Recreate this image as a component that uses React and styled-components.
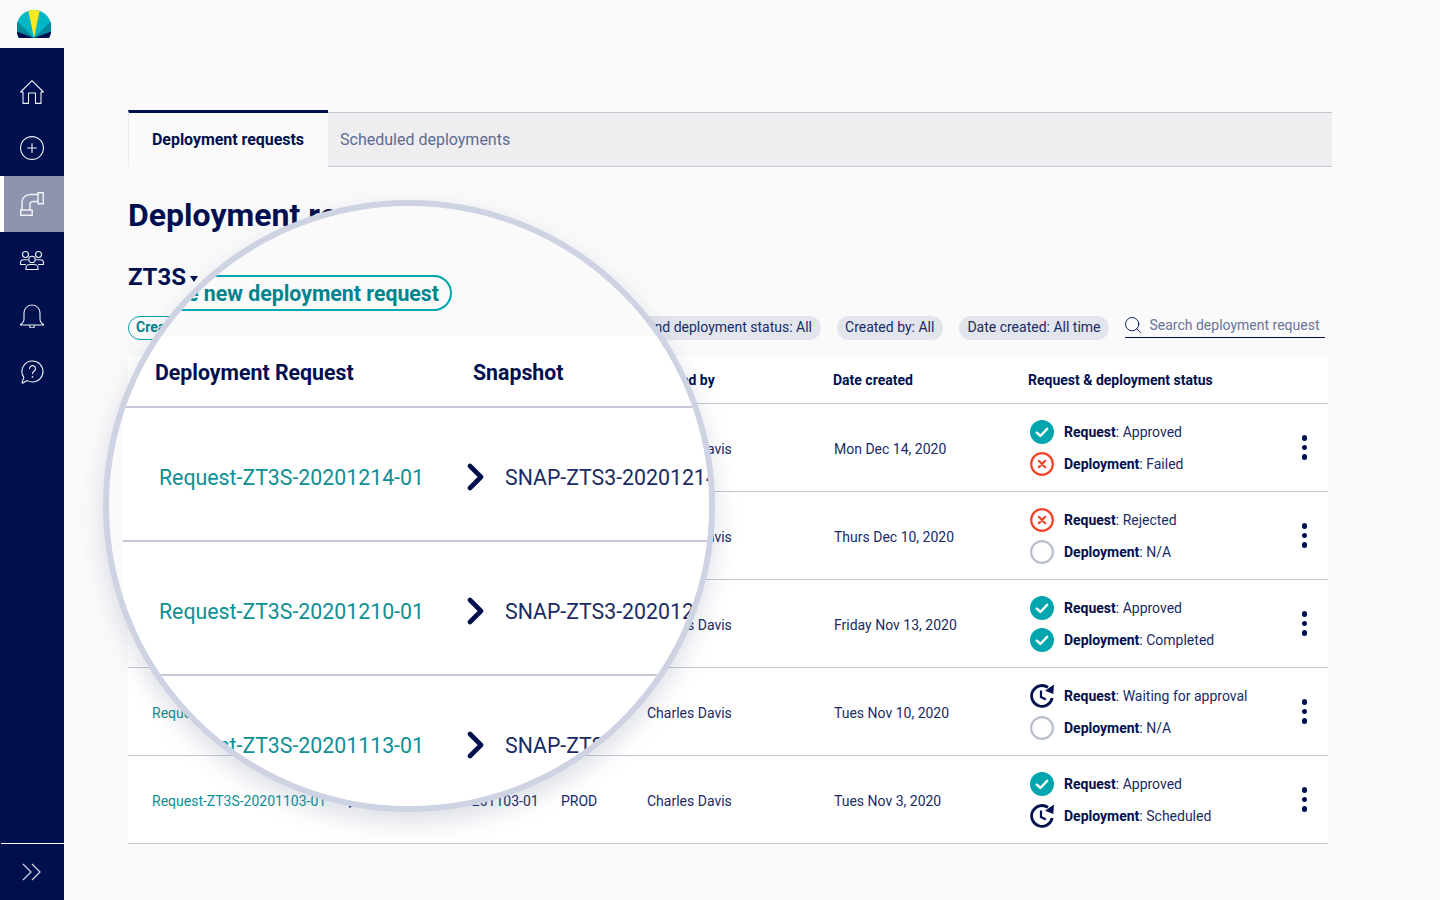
import styled, { createGlobalStyle } from 'styled-components'
import { Search } from 'lucide-react'

const navy = '#00104f'
const ink = '#1a2a64'
const line = '#c3c7d6'

const rows = [
  { id: 'Request-ZT3S-20201214-01', snap: 'SNAP-ZTS3-20201214-01', env: 'PROD', by: 'Charles Davis', date: 'Mon Dec 14, 2020', req: ['ok', 'Approved'], dep: ['fail', 'Failed'] },
  { id: 'Request-ZT3S-20201210-01', snap: 'SNAP-ZTS3-20201210-01', env: 'PROD', by: 'Charles Davis', date: 'Thurs Dec 10, 2020', req: ['fail', 'Rejected'], dep: ['none', 'N/A'] },
  { id: 'Request-ZT3S-20201113-01', snap: 'SNAP-ZTS3-20201113-01', env: 'PROD', by: 'Charles Davis', date: 'Friday Nov 13, 2020', req: ['ok', 'Approved'], dep: ['ok', 'Completed'] },
  { id: 'Request-ZT3S-20201110-01', snap: 'SNAP-ZTS3-20201110-01', env: 'PROD', by: 'Charles Davis', date: 'Tues Nov 10, 2020', req: ['wait', 'Waiting for approval'], dep: ['none', 'N/A'] },
  { id: 'Request-ZT3S-20201103-01', snap: 'SNAP-ZTS3-20201103-01', env: 'PROD', by: 'Charles Davis', date: 'Tues Nov 3, 2020', req: ['ok', 'Approved'], dep: ['wait', 'Scheduled'] },
]

const lensRows = rows.slice(0, 3)

function StatusIcon({ kind }) {
  if (kind === 'ok') {
    return (
      <svg width="24" height="24" viewBox="0 0 24 24">
        <circle cx="12" cy="12" r="12" fill="#00a5ad" />
        <path d="M6.8 12.6l3.6 3.4 6.8-7.2" fill="none" stroke="#fff" strokeWidth="2.4" strokeLinecap="round" strokeLinejoin="round" />
      </svg>
    )
  }
  if (kind === 'fail') {
    return (
      <svg width="24" height="24" viewBox="0 0 24 24">
        <circle cx="12" cy="12" r="10.8" fill="none" stroke="#f4452a" strokeWidth="2.2" />
        <path d="M8.8 8.8l6.4 6.4M15.2 8.8l-6.4 6.4" fill="none" stroke="#f4452a" strokeWidth="2.2" strokeLinecap="round" />
      </svg>
    )
  }
  if (kind === 'wait') {
    return (
      <svg width="24" height="24" viewBox="0 0 24 24">
        <path d="M18 3.400A10.400 10.400 0 1 0 22.200 14" fill="none" stroke={navy} strokeWidth="2.800" />
        <path d="M24 .6l-.7 9.400-8.300-3.300z" fill={navy} />
        <path d="M11 6.500v6.500l4.800 2.500" fill="none" stroke={navy} strokeWidth="2.200" />
      </svg>
    )
  }
  return (
    <svg width="24" height="24" viewBox="0 0 24 24">
      <circle cx="12" cy="12" r="10.900" fill="none" stroke="#b9bed0" strokeWidth="2.200" />
    </svg>
  )
}

function NavIcon({ children }) {
  return (
    <svg width="24" height="24" viewBox="0 0 24 24" fill="none" stroke="#eef0f6" strokeWidth="1.100" strokeLinejoin="round" strokeLinecap="round">
      {children}
    </svg>
  )
}

function Logo() {
  return (
    <svg width="34" height="30" viewBox="0 0 34 30">
      <defs>
        <clipPath id="dome">
          <path d="M2 29C.6 26.500 0 24 0 21.500A17 17 0 0 1 17 1a17 17 0 0 1 17 20.500c0 2.500-.6 5-2 7.500z" />
        </clipPath>
      </defs>
      <g clipPath="url(#dome)">
        <rect width="34" height="30" fill="#00b8c4" />
        <path d="M17 29L-4 8V30H38V8z" fill="#00899a" />
        <path d="M17 29L-4 21V30H38V21z" fill={navy} />
        <path d="M17 29L11 0H23z" fill="#ffe81f" />
      </g>
    </svg>
  )
}

function App() {
  return (
    <Page>
      <GlobalStyle />
      <Sidebar>
        <LogoBox><Logo /></LogoBox>
        <Nav>
          <NavItems>
            <NavItem>
              <NavIcon><path d="M.6 12L12 .6 23.400 12H21v11.400h-5.500V13h-7v10.400H3V12z" /></NavIcon>
            </NavItem>
            <NavItem>
              <NavIcon><circle cx="12" cy="12" r="11.400" /><path d="M12 7.500v9M7.500 12h9" /></NavIcon>
            </NavItem>
            <NavItem $active>
              <NavIcon>
                <path d="M18 2.500h-8a8 8 0 0 0-8 8V18M18 9.500h-5a3 3 0 0 0-3 3V18" strokeWidth="1.500" />
                <rect x="18" y=".7" width="5.300" height="11" strokeWidth="1.500" />
                <rect x=".7" y="18" width="11.500" height="5.300" strokeWidth="1.500" />
              </NavIcon>
            </NavItem>
            <NavItem>
              <NavIcon>
                <circle cx="5.500" cy="6.500" r="3" />
                <circle cx="18.500" cy="6.500" r="3" />
                <circle cx="12" cy="11.500" r="3.200" />
                <path d="M6 21.500V20c0-2 1.800-3.500 3.500-3.500h5c1.700 0 3.500 1.500 3.500 3.500v1.500z" />
                <path d="M5.500 16.500H.5V15c0-2 1.500-3.200 3.200-3.200H7.500M18.500 16.500h5V15c0-2-1.500-3.200-3.200-3.200H16.500" />
              </NavIcon>
            </NavItem>
            <NavItem>
              <NavIcon>
                <path d="M12 1C7 1 4 5 4 9v6c0 2-1 4-3.500 5.500v.5h23v-.5C21 19 20 17 20 15V9c0-4-3-8-8-8z" />
                <path d="M9.500 21.500a2.500 2.500 0 0 0 5 0" />
              </NavIcon>
            </NavItem>
            <NavItem>
              <NavIcon>
                <path d="M12.500 1a10.500 10.500 0 0 1 0 21c-2 0-3.800-.5-5.200-1.400L3 23c-.5.300-1 0-.8-.6l1.600-5A10.500 10.500 0 0 1 12.500 1z" />
                <path d="M9.500 8.500a3 3 0 1 1 4.500 2.700c-1 .6-1.500 1.300-1.500 2.600" />
                <path d="M12.500 16.700v.3" strokeWidth="1.600" />
              </NavIcon>
            </NavItem>
          </NavItems>
          <Expand>
            <svg width="20" height="18" viewBox="0 0 20 18" fill="none" stroke="#d5d8e5" strokeWidth="1.200">
              <path d="M1 1l8 8-8 8M10 1l8 8-8 8" />
            </svg>
          </Expand>
        </Nav>
      </Sidebar>

      <Main>
        <Tabs>
          <Tab $active>Deployment requests</Tab>
          <Tab>Scheduled deployments</Tab>
          <TabFill />
        </Tabs>

        <Title>Deployment requests</Title>
        <Project>ZT3S<Caret /></Project>

        <FilterRow>
          <CreatePill>Create new deployment request</CreatePill>
          <Filters>
            <Chip>Environment: All</Chip>
            <Chip>Request and deployment status: All</Chip>
            <Chip>Created by: All</Chip>
            <Chip>Date created: All time</Chip>
            <SearchBox>
              <SearchIcon size={20} strokeWidth={1.100} color={navy} />
              <span>Search deployment request</span>
            </SearchBox>
          </Filters>
        </FilterRow>

        <Table>
          <HeadRow>
            <HeadFirst><span>Deployment Request</span><span>Snapshot</span></HeadFirst>
            <span>Env</span>
            <span>Created by</span>
            <span>Date created</span>
            <span>Request &amp; deployment status</span>
          </HeadRow>
          {rows.map((r) => (
            <Row key={r.id}>
              <FirstCell>
                <RowLink>{r.id}</RowLink>
                <svg width="10" height="14" viewBox="0 0 10 14" fill="none" stroke={navy} strokeWidth="2.200" strokeLinecap="round" strokeLinejoin="round">
                  <path d="M2 1.500L7.500 7 2 12.500" />
                </svg>
                <span>{r.snap}</span>
              </FirstCell>
              <span>{r.env}</span>
              <span>{r.by}</span>
              <DateCell>{r.date}</DateCell>
              <StatusCell>
                <StatusList>
                  <StatusLine><StatusIcon kind={r.req[0]} /><span><b>Request</b>: {r.req[1]}</span></StatusLine>
                  <StatusLine><StatusIcon kind={r.dep[0]} /><span><b>Deployment</b>: {r.dep[1]}</span></StatusLine>
                </StatusList>
                <Dots><i /><i /><i /></Dots>
              </StatusCell>
            </Row>
          ))}
        </Table>
      </Main>

      <Lens>
        <LensPill>Create new deployment request</LensPill>
        <LensPanel>
          <LensHead>
            <span>Deployment Request</span>
            <span>Snapshot</span>
          </LensHead>
          {lensRows.map((r) => (
            <LensRow key={r.id}>
              <LensLink>{r.id}</LensLink>
              <svg width="38" height="30" viewBox="0 0 38 30" fill="none" stroke={navy} strokeWidth="4.600" strokeLinecap="round" strokeLinejoin="round">
                <path d="M3 4l11 11L3 26" />
              </svg>
              <span>{r.snap}</span>
            </LensRow>
          ))}
        </LensPanel>
      </Lens>
    </Page>
  )
}

const GlobalStyle = createGlobalStyle`
  html, body {
    margin: 0;
    height: 100%;
    background: #fafafb;
    font-family: Roboto, "Liberation Sans", sans-serif;
    color: ${ink};
  }
`

const Page = styled.div`
  position: relative;
  display: flex;
  height: 100vh;
  overflow: hidden;
`

const Sidebar = styled.aside`
  width: 64px;
  flex: none;
  display: flex;
  flex-direction: column;
`

const LogoBox = styled.div`
  height: 48px;
  display: flex;
  justify-content: center;
  align-items: flex-start;
  padding: 9px 0 0 4px;
  box-sizing: border-box;
`

const Nav = styled.nav`
  flex: 1;
  background: ${navy};
  display: flex;
  flex-direction: column;
  justify-content: space-between;
`

const NavItems = styled.div`
  padding-top: 16px;
`

const NavItem = styled.div`
  height: 56px;
  display: flex;
  align-items: center;
  justify-content: center;
  box-sizing: border-box;
  background: ${(p) => (p.$active ? '#8e94ae' : 'transparent')};
  border-left: ${(p) => (p.$active ? '4px solid #fff' : 'none')};
  padding-right: ${(p) => (p.$active ? '4px' : '0')};
`

const Expand = styled.div`
  height: 57px;
  margin-left: 1px;
  border-top: 1px solid #fff;
  box-sizing: border-box;
  display: flex;
  align-items: center;
  justify-content: center;
  padding-right: 2px;
`

const Main = styled.main`
  flex: 1;
  padding: 110px 108px 0 64px;
`

const Tabs = styled.div`
  display: flex;
  height: 57px;
`

const Tab = styled.div`
  box-sizing: border-box;
  display: flex;
  align-items: center;
  font-size: 16px;
  white-space: nowrap;
  ${(p) =>
    p.$active
      ? `
    width: 200px;
    padding: 0 0 2px 23px;
    border-top: 3px solid ${navy};
    border-left: 1px solid #ececf0;
    font-weight: 700;
    letter-spacing: -0.05px;
    color: ${navy};
  `
      : `
    margin-top: 2px;
    padding: 0 0 0 12px;
    background: #eeeef1;
    border-top: 1px solid ${line};
    border-bottom: 1px solid ${line};
    color: #5f6a90;
    width: 230px;
  `}
`

const TabFill = styled.div`
  flex: 1;
  margin-top: 2px;
  background: #eeeef1;
  border-top: 1px solid ${line};
  border-bottom: 1px solid ${line};
`

const Title = styled.h1`
  margin: 28px 0 0;
  font-size: 32px;
  line-height: 40px;
  font-weight: 700;
  color: ${navy};
  white-space: nowrap;
`

const Project = styled.div`
  display: flex;
  align-items: center;
  margin-top: 26px;
  font-size: 24px;
  line-height: 32px;
  font-weight: 700;
  color: ${navy};
`

const Caret = styled.span`
  width: 0;
  height: 0;
  margin: 4px 0 0 4px;
  border-left: 4px solid transparent;
  border-right: 4px solid transparent;
  border-top: 6px solid ${navy};
`

const FilterRow = styled.div`
  display: flex;
  align-items: center;
  justify-content: space-between;
  margin: 23px 0 16px;
  height: 24px;
  padding-right: 7px;
`

const CreatePill = styled.div`
  box-sizing: border-box;
  height: 24px;
  line-height: 21px;
  padding: 0 7px;
  border: 1px solid #00a5ad;
  border-radius: 12px;
  font-size: 14px;
  font-weight: 700;
  color: #00848c;
  white-space: nowrap;
`

const Filters = styled.div`
  display: flex;
  align-items: center;
  gap: 16px;
`

const Chip = styled.div`
  height: 24px;
  line-height: 22px;
  padding: 0 8.500px;
  border-radius: 12px;
  background: #e3e5ec;
  font-size: 14px;
  white-space: nowrap;
`

const SearchBox = styled.div`
  box-sizing: border-box;
  width: 200px;
  height: 24px;
  margin-top: -4px;
  padding-bottom: 1px;
  display: flex;
  align-items: center;
  gap: 7px;
  border-bottom: 1px solid ${navy};
  font-size: 14px;
  color: #6a7497;
  white-space: nowrap;
`

const SearchIcon = styled(Search)`
  margin-left: -2.500px;
  flex: none;
`

const Table = styled.section`
  width: 1200px;
  background: #fff;
  font-size: 14px;
`

const columns = `
  display: grid;
  grid-template-columns: 409px 86px 187px 194px 1fr;
  padding-left: 24px;
  box-sizing: border-box;
  align-items: center;
  border-bottom: 1px solid ${line};
`

const HeadRow = styled.div`
  ${columns}
  height: 48px;
  font-weight: 700;
  color: ${navy};
  & > span:nth-child(4) { margin-left: -1px; }
`

const HeadFirst = styled.div`
  display: flex;
  gap: 100px;
`

const Row = styled.div`
  ${columns}
  height: 88px;
  padding-top: 2px;
`

const FirstCell = styled.div`
  display: flex;
  align-items: center;
  gap: 21.500px;
  white-space: nowrap;
`

const RowLink = styled.span`
  color: #0d8f96;
`

const DateCell = styled.span`
  white-space: nowrap;
`

const StatusCell = styled.div`
  display: flex;
  align-items: center;
  justify-content: space-between;
  margin-top: -2px;
  padding: 0 21px 0 2px;
`

const StatusList = styled.div`
  display: flex;
  flex-direction: column;
  gap: 8px;
`

const StatusLine = styled.div`
  display: flex;
  align-items: center;
  gap: 10px;
  height: 24px;
  white-space: nowrap;
  b { font-weight: 700; color: ${navy}; }
`

const Dots = styled.div`
  display: flex;
  flex-direction: column;
  gap: 4px;
  i {
    display: block;
    width: 5.500px;
    height: 5.500px;
    border-radius: 50%;
    background: ${navy};
  }
`

/* the magnifier lies over the page, so this one is placed absolutely */
const Lens = styled.div`
  position: absolute;
  left: 103px;
  top: 200px;
  width: 612px;
  height: 612px;
  box-sizing: border-box;
  border: 6px solid #cdd3e2;
  border-radius: 50%;
  overflow: hidden;
  background: #fafafb;
  box-shadow: 0 10px 24px rgba(60, 70, 110, 0.18);
  padding-top: 69px;
`

const LensPill = styled.div`
  box-sizing: border-box;
  width: 337px;
  height: 36px;
  margin-left: 6px;
  padding: 0 11px;
  display: flex;
  align-items: center;
  justify-content: flex-end;
  border: 2px solid #00a5ad;
  border-radius: 18px;
  font-size: 21.300px;
  font-weight: 700;
  color: #00848c;
  white-space: nowrap;
`

const LensPanel = styled.div`
  margin: 25px 0 0 14px;
  width: 760px;
  background: #fff;
  color: ${ink};
`

const LensHead = styled.div`
  box-sizing: border-box;
  height: 72px;
  padding: 2px 0 0 32px;
  display: grid;
  grid-template-columns: 318px 1fr;
  align-items: center;
  border-bottom: 2px solid ${line};
  font-size: 21.300px;
  font-weight: 700;
  color: ${navy};
`

const LensRow = styled.div`
  box-sizing: border-box;
  height: 134px;
  padding: 6px 0 0 36px;
  display: grid;
  grid-template-columns: 308px 38px 1fr;
  align-items: center;
  border-bottom: 2px solid ${line};
  font-size: 21.300px;
  white-space: nowrap;
`

const LensLink = styled.span`
  color: #0d8f96;
`

export default App
